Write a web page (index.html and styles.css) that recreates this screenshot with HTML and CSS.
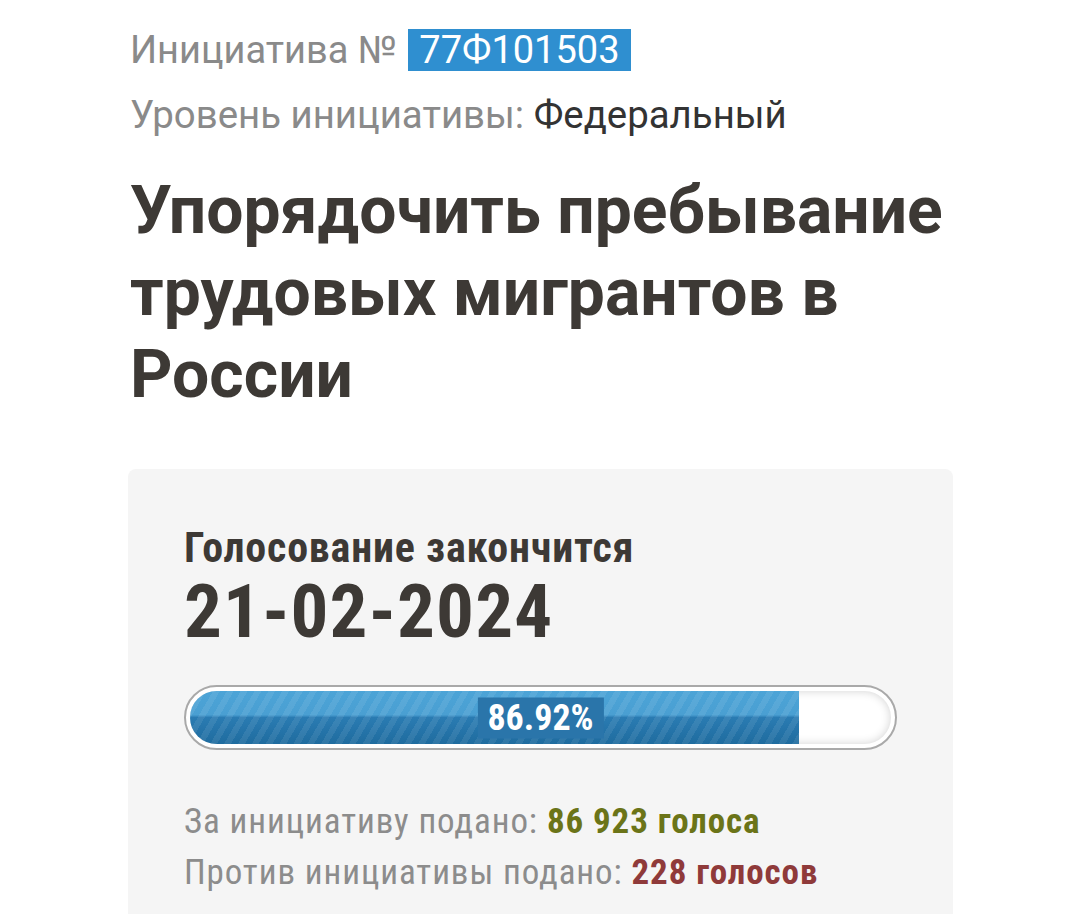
FILE: index.html
```html
<!doctype html>
<html lang="ru">

<head>
    <meta charset="UTF-8" />
    <meta name="viewport" content="width=device-width, initial-scale=1.0" />
    <title>Инициатива 77Ф101503</title>
    <link rel="stylesheet" href="styles.css">
</head>

<body>
    <div class="page">
        <div class="number">
            Инициатива № <span class="badge">77Ф101503</span>
        </div>
        <div class="level">
            Уровень инициативы: <span class="level-value">Федеральный</span>
        </div>

        <h1 class="title">Упорядочить пребывание трудовых мигрантов в России</h1>

        <div class="vote-card">
            <div class="deadline-label">Голосование закончится</div>
            <div class="deadline-date">21-02-2024</div>

            <div class="progress">
                <div class="progress-track">
                    <div class="progress-fill" style="width: 86.92%"></div>
                    <span class="progress-label">86.92%</span>
                </div>
            </div>

            <div class="votes">
                <div class="vote-line">За инициативу подано: <span class="vote-for">86 923 голоса</span></div>
                <div class="vote-line">Против инициативы подано: <span class="vote-against">228 голосов</span></div>
            </div>
        </div>
    </div>
</body>

</html>
```

FILE: styles.css
```css
body {
    margin: 0;
    background: #fff;
    font-family: Roboto, "Noto Sans", sans-serif;
    color: #3d3935;
}

.page {
    padding: 29px 127px 0 130px;
}

.number {
    font-size: 38px;
    line-height: 42px;
    color: #8a8a8a;
}

.badge {
    display: inline-block;
    margin-left: 2px;
    padding: 0 11px;
    background: #2f8fd0;
    color: #fff;
}

.level {
    margin-top: 20px;
    font-size: 38.4px;
    line-height: 48px;
    color: #8a8a8a;
}

.level-value {
    color: #333;
}

.title {
    margin: 31px 0 0;
    font-size: 66px;
    line-height: 82px;
    font-weight: 700;
    color: #3d3935;
    max-width: 830px;
}

.vote-card {
    margin-top: 53px;
    margin-left: -2px;
    width: 713px;
    padding: 59px 56px 40px;
    background: #f5f5f5;
    border-radius: 8px;
}

.deadline-label,
.deadline-date,
.votes,
.progress-label {
    font-family: "Roboto Condensed", "Liberation Sans Narrow", "DejaVu Sans Condensed", sans-serif;
}

.deadline-label {
    font-size: 42px;
    line-height: 40px;
    font-weight: 700;
    letter-spacing: 0.8px;
}

.deadline-date {
    margin-top: 7px;
    font-size: 75px;
    line-height: 72px;
    font-weight: 700;
    letter-spacing: 1.2px;
}

.progress {
    margin-top: 38px;
    height: 65px;
    border: 2px solid #a9a9a9;
    border-radius: 34px;
    background: #fff;
    padding: 4px;
    box-sizing: border-box;
}

.progress-track {
    position: relative;
    height: 100%;
    border-radius: 28px;
    overflow: hidden;
    background: #fff;
    box-shadow: inset 0 0 10px rgba(0, 0, 0, 0.18);
}

.progress-fill {
    height: 100%;
    background:
        repeating-linear-gradient(-60deg, rgba(255, 255, 255, 0.08) 0 6px, rgba(255, 255, 255, 0) 6px 12px),
        linear-gradient(#4ca4d7 0%, #4a9fd2 45%, #2a7bb2 50%, #1f6c9f 100%);
}

.progress-label {
    position: absolute;
    left: 50%;
    top: 50%;
    transform: translate(-50%, -50%);
    padding: 0 10px;
    background: #2a75aa;
    color: #fff;
    font-size: 36px;
    font-weight: 700;
    line-height: 41px;
}

.votes {
    margin-top: 46px;
    font-size: 35px;
    line-height: 51px;
    letter-spacing: 0.9px;
    color: #8c8c8c;
}

.vote-for {
    color: #6b7418;
    font-weight: 700;
}

.vote-against {
    color: #8f3a3a;
    font-weight: 700;
}
```
